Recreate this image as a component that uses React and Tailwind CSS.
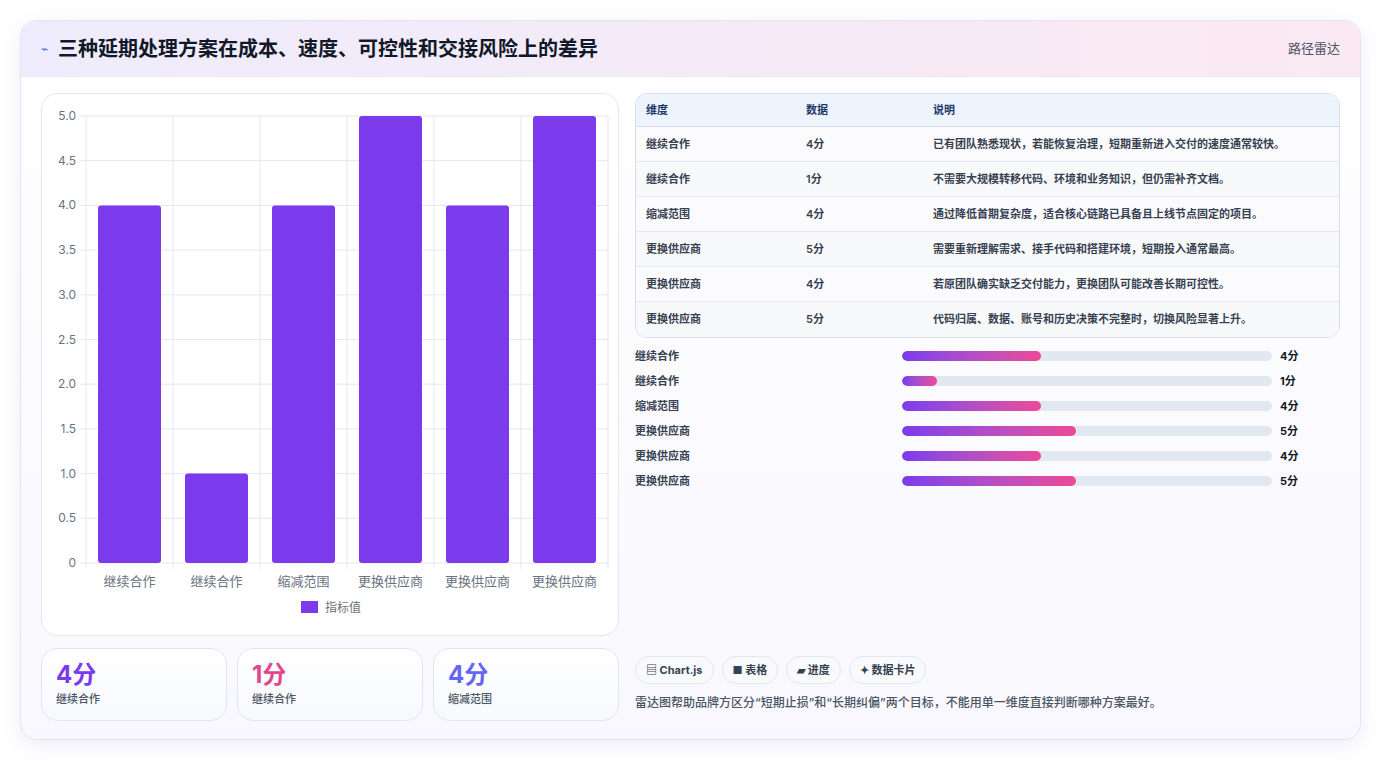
import { useState } from 'react'

const bars = [
  { name: '继续合作', v: 4 },
  { name: '继续合作', v: 1 },
  { name: '缩减范围', v: 4 },
  { name: '更换供应商', v: 5 },
  { name: '更换供应商', v: 4 },
  { name: '更换供应商', v: 5 },
]

const rows = [
  ['继续合作', '4分', '已有团队熟悉现状，若能恢复治理，短期重新进入交付的速度通常较快。'],
  ['继续合作', '1分', '不需要大规模转移代码、环境和业务知识，但仍需补齐文档。'],
  ['缩减范围', '4分', '通过降低首期复杂度，适合核心链路已具备且上线节点固定的项目。'],
  ['更换供应商', '5分', '需要重新理解需求、接手代码和搭建环境，短期投入通常最高。'],
  ['更换供应商', '4分', '若原团队确实缺乏交付能力，更换团队可能改善长期可控性。'],
  ['更换供应商', '5分', '代码归属、数据、账号和历史决策不完整时，切换风险显著上升。'],
]

const progress = [
  ['继续合作', 4, 139],
  ['继续合作', 1, 35],
  ['缩减范围', 4, 139],
  ['更换供应商', 5, 174],
  ['更换供应商', 4, 139],
  ['更换供应商', 5, 174],
]

function Chart() {
  const left = 44, top = 22, w = 522, h = 447
  const ticks = [0, 0.5, 1, 1.5, 2, 2.5, 3, 3.5, 4, 4.5, 5]
  const cw = w / 6
  return (
    <svg width="578" height="543" className="block">
      {ticks.map(t => {
        const y = top + h - (t / 5) * h
        return (
          <g key={t}>
            <line x1={left - 6} x2={left + w} y1={y} y2={y} stroke="#e5e7eb" />
            <text x={left - 10} y={y + 4} textAnchor="end" fontSize="12" fill="#6b7280">{t === 0 ? '0' : t.toFixed(1)}</text>
          </g>
        )
      })}
      {[0, 1, 2, 3, 4, 5, 6].map(i => (
        <line key={i} x1={left + i * cw} x2={left + i * cw} y1={top} y2={top + h + 6} stroke="#e5e7eb" />
      ))}
      {bars.map((b, i) => {
        const bh = (b.v / 5) * h
        return (
          <g key={i}>
            <rect x={left + i * cw + 12} y={top + h - bh} width={cw - 24} height={bh} rx="3" fill="#7c3aed" />
            <text x={left + i * cw + cw / 2} y={top + h + 23} textAnchor="middle" fontSize="13" fill="#6b7280">{b.name}</text>
          </g>
        )
      })}
      <rect x="259" y="507" width="17" height="12" fill="#7c3aed" />
      <text x="283" y="518" fontSize="12" fill="#6b7280">指标值</text>
    </svg>
  )
}

export default function App() {
  const [tab] = useState(0)
  return (
    <div className="w-[1381px] h-[760px] bg-white p-5" style={{ fontFamily: 'Inter, "Noto Sans CJK SC", sans-serif' }}>
      <div className="h-[720px] rounded-2xl border border-[#e3e4f3] bg-gradient-to-b from-white to-[#f8f8fe] shadow-[0_6px_20px_rgba(120,110,200,0.12)] overflow-hidden flex flex-col">
        {/* Header */}
        <div className="h-[56px] flex items-center justify-between px-5 bg-gradient-to-r from-[#eeecfc] to-[#fbe9f2] border-b border-[#ecebf5]">
          <div className="flex items-center gap-2.5">
            <span className="text-[#4f6bd6] text-xs">⌁</span>
            <h1 className="text-[20px] font-bold text-[#111827]">三种延期处理方案在成本、速度、可控性和交接风险上的差异</h1>
          </div>
          <span className="text-[13px] text-[#4b5563]">路径雷达</span>
        </div>

        <div className="flex gap-4 px-5 pt-4">
          {/* Left */}
          <div className="w-[578px] flex flex-col gap-3">
            <div className="h-[543px] rounded-2xl border border-[#e5e7f0] bg-white">
              <Chart />
            </div>
            <div className="grid grid-cols-3 gap-2.5">
              {[['4分', '继续合作', 'text-[#7c3aed]'], ['1分', '继续合作', 'text-[#e0488e]'], ['4分', '缩减范围', 'text-[#6366f1]']].map(([v, l, c], i) => (
                <div key={i} className="h-[73px] rounded-2xl border border-[#dfe6f3] bg-gradient-to-b from-white to-[#f7f9fd] px-3.5 pt-2.5">
                  <div className={`text-[24px] font-bold leading-8 ${c}`}>{v}</div>
                  <div className="text-[11px] text-[#4b5563] font-medium">{l}</div>
                </div>
              ))}
            </div>
          </div>

          {/* Right */}
          <div className="flex-1 flex flex-col">
            <div className="rounded-xl border border-[#d9dde8] overflow-hidden bg-white text-[11px]">
              <div className="flex h-[33px] items-center bg-[#eef4fd] text-[#1e3a6a] font-bold border-b border-[#d9dde8]">
                <div className="w-[170px] pl-2.5">维度</div>
                <div className="w-[127px]">数据</div>
                <div className="flex-1">说明</div>
              </div>
              {rows.map((r, i) => (
                <div key={i} className={`flex h-[35px] items-center text-[#374151] font-semibold ${i < 5 ? 'border-b border-[#e6e8ef]' : ''} ${i % 2 ? 'bg-[#f7f9fb]' : 'bg-[#fbfbfe]'}`}>
                  <div className="w-[170px] pl-2.5">{r[0]}</div>
                  <div className="w-[127px]">{r[1]}</div>
                  <div className="flex-1">{r[2]}</div>
                </div>
              ))}
            </div>

            <div className="mt-2.5 flex flex-col gap-[9px]">
              {progress.map(([l, v, w], i) => (
                <div key={i} className="flex items-center h-4 text-[11px] font-semibold text-[#374151]">
                  <div className="w-[267px]">{l}</div>
                  <div className="w-[370px] h-2.5 rounded-full bg-[#e2e8f0] overflow-hidden">
                    <div className="h-full rounded-full bg-gradient-to-r from-[#7c3aed] to-[#ec4899]" style={{ width: w }} />
                  </div>
                  <div className="ml-2 font-bold text-[#111827]">{v}分</div>
                </div>
              ))}
            </div>

            <div className="mt-auto mb-[9px]">
              <div className="flex gap-2">
                {['▤ Chart.js', '■ 表格', '▰ 进度', '✦ 数据卡片'].map(t => (
                  <span key={t} className="h-[28px] px-2.5 flex items-center rounded-full border border-[#e5e7eb] bg-[#f9fafb] text-[11px] font-bold text-[#374151]">{t}</span>
                ))}
              </div>
              <p className="mt-2.5 text-[12px] font-medium text-[#4b5563]">雷达图帮助品牌方区分“短期止损”和“长期纠偏”两个目标，不能用单一维度直接判断哪种方案最好。</p>
            </div>
          </div>
        </div>
      </div>
    </div>
  )
}
